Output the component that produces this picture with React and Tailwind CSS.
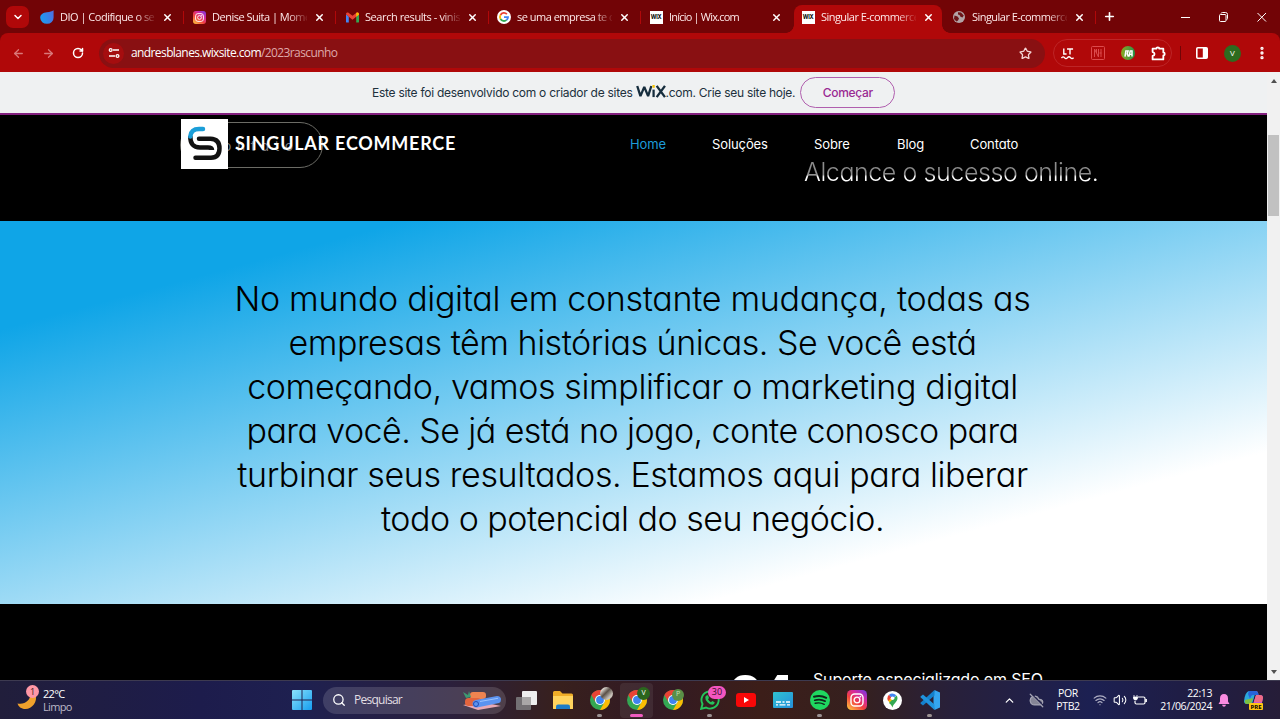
import React from "react";
import { ArrowLeft, ArrowRight, RotateCw, Star, X, Plus, ChevronDown, ChevronUp, Search, CloudOff, Wifi, Volume2, MoreVertical } from "lucide-react";

const ui = "font-['Open_Sans','Noto_Sans',sans-serif]";

function InstaIcon({ className, id }) {
  return (
    <svg viewBox="0 0 20 20" className={className}>
      <defs>
        <linearGradient id={id} x1="0.1" y1="1" x2="0.9" y2="0">
          <stop offset="0" stopColor="#fdc33f" />
          <stop offset="0.4" stopColor="#f2403f" />
          <stop offset="0.7" stopColor="#d42aa0" />
          <stop offset="1" stopColor="#7a3ae0" />
        </linearGradient>
      </defs>
      <rect width="20" height="20" rx="4.5" fill={`url(#${id})`} />
      <rect x="4" y="4" width="12" height="12" rx="3.6" fill="none" stroke="#fff" strokeWidth="1.4" />
      <circle cx="10" cy="10" r="2.9" fill="none" stroke="#fff" strokeWidth="1.4" />
      <circle cx="13.4" cy="6.6" r="0.9" fill="#fff" />
    </svg>
  );
}

function DioIcon() {
  return (
    <svg viewBox="0 0 14 14" className="size-[14px]">
      <defs>
        <linearGradient id="dio" x1="0" y1="0.6" x2="1" y2="0.3">
          <stop offset="0" stopColor="#1b9cf0" />
          <stop offset="1" stopColor="#4c6fe0" />
        </linearGradient>
      </defs>
      <path d="M13.6 0.3V7.500A6.700 6.200 0 0 1 .2 7.800C.2 4.500 3 2.400 7 2.200 10 2 12 1.500 13.600.3Z" fill="url(#dio)" />
    </svg>
  );
}

function GmailIcon() {
  return (
    <svg viewBox="0 0 14 11" className="w-[13px] h-[11px]">
      <path d="M0 2v8a1 1 0 0 0 1 1h2V4.500Z" fill="#4285f4" />
      <path d="M14 2v8a1 1 0 0 1-1 1h-2V4.500Z" fill="#34a853" />
      <path d="M0 2C0 .2 1.800-.4 3 .6L7 3.700 11 .6C12.200-.4 14 .2 14 2L11 4.800 7 7.800 3 4.800Z" fill="#ea4335" />
      <path d="M11 .6C12.200-.4 14 .2 14 2v.5L11 4.800Z" fill="#fbbc04" />
    </svg>
  );
}

function GoogleIcon() {
  return (
    <svg viewBox="0 0 14 14" className="size-[14px]">
      <circle cx="7" cy="7" r="7" fill="#fff" />
      <g fill="none" strokeWidth="1.800">
        <path d="M3.500 5A4 4 0 0 1 9.900 4.200" stroke="#ea4335" />
        <path d="M3.500 5A4 4 0 0 0 3.500 9" stroke="#fbbc04" />
        <path d="M3.500 9A4 4 0 0 0 9.500 10.100" stroke="#34a853" />
        <path d="M9.500 10.100A4 4 0 0 0 11 7.100H7" stroke="#4285f4" />
      </g>
    </svg>
  );
}

function WixIcon() {
  return (
    <span className="flex size-[13px] items-center justify-center bg-white font-['Inter',sans-serif] text-[5.500px] font-bold tracking-[-0.3px] text-black">WIX</span>
  );
}

function GlobeIcon() {
  return (
    <svg viewBox="0 0 12 12" className="size-[12px]">
      <circle cx="6" cy="6" r="6" fill="#b3a3a6" />
      <path d="M1.500 4.500 4.500 5.500 6 7.500 5 9.500 3.500 10.500 1 8ZM5 1.200 8 1.500 10.800 4.500 9.500 6.500 7.500 5.800 6.500 4 5 3.500Z" fill="#6b1518" />
    </svg>
  );
}

function ChromeIcon() {
  return (
    <svg viewBox="0 0 20 20" className="size-[20px]">
      <circle cx="10" cy="10" r="10" fill="#34a853" />
      <path d="M1.340 5A10 10 0 0 1 18.660 5H10a5 5 0 0 0-4.330 7.500Z" fill="#ea4335" />
      <path d="M18.660 5A10 10 0 0 1 10 20l4.330-7.500A5 5 0 0 0 10 5Z" fill="#fbbc04" />
      <circle cx="10" cy="10" r="5" fill="#fff" />
      <circle cx="10" cy="10" r="3.900" fill="#3f83f0" />
    </svg>
  );
}

function Tab({ icon, label, textClass, active, last, className }) {
  return (
    <div className={`relative flex h-[28px] shrink-0 items-center pb-[4px] ${className}`}>
      {active && (
        <>
          <div className="absolute inset-x-0 top-0 bottom-0 rounded-t-[8px] bg-[#b00809]" />
          <div className="absolute -left-[8px] bottom-0 size-[8px] bg-[radial-gradient(circle_at_0_0,#720406_7.500px,#b00809_8px)]" />
          <div className="absolute -right-[8px] bottom-0 size-[8px] bg-[radial-gradient(circle_at_100%_0,#720406_7.500px,#b00809_8px)]" />
        </>
      )}
      <div className="relative flex w-[14px] shrink-0 items-center justify-center">{icon}</div>
      <div className="relative ml-[6px] w-[95px] whitespace-nowrap text-[11px] leading-[16px] text-[#fde9e9] [mask-image:linear-gradient(90deg,#000_76px,transparent_97px)]">
        <span className={textClass}>{label}</span>
      </div>
      <X className="relative ml-[7px] size-[11px] shrink-0 text-white" strokeWidth={3.2} />
      {!active && !last && <div className="absolute right-0 top-[6px] h-[13px] w-px bg-[#b00809]" />}
    </div>
  );
}

function TabStrip() {
  return (
    <div className="flex h-[33px] items-end bg-[#720406]">
      <div className="mb-[5px] ml-[6px] flex h-[22px] w-[23px] shrink-0 items-center justify-center rounded-[7px] bg-[#b00809]">
        <ChevronDown className="size-[12px] text-white" strokeWidth={3} />
      </div>
      <div className="flex h-[28px]">
        <Tab className="w-[155px] pl-[11px]" icon={<DioIcon />} label="DIO | Codifique o seu" textClass="tracking-[-0.5px]" />
        <Tab className="w-[152px] pl-[8px]" icon={<InstaIcon id="ig1" className="size-[13px]" />} label="Denise Suita | Momen" textClass="tracking-[-0.5px]" />
        <Tab className="w-[153px] pl-[9px]" icon={<GmailIcon />} label="Search results - vinisa" textClass="tracking-[-0.42px]" />
        <Tab className="w-[152px] pl-[8px]" icon={<GoogleIcon />} label="se uma empresa te co" textClass="tracking-[-0.5px]" />
        <Tab last className="w-[153px] pl-[8px]" icon={<WixIcon />} label="Início | Wix.com" textClass="tracking-[-0.8px]" />
        <Tab active className="w-[148px] pl-[7px]" icon={<WixIcon />} label="Singular E-commerce" textClass="tracking-[-0.54px]" />
        <Tab className="w-[154px] pl-[10px]" icon={<GlobeIcon />} label="Singular E-commerce" textClass="tracking-[-0.54px]" />
      </div>
      <div className="flex h-[33px] flex-1 items-center text-white">
        <Plus className="ml-[7px] size-[13px]" strokeWidth={3} />
        <span className="flex-1" />
        <svg viewBox="0 0 90 12" className="mr-[13px] h-[12px] w-[90px]" fill="none" stroke="#fff" strokeWidth="1">
          <path d="M4 6.500h9" />
          <rect x="42.500" y="3.500" width="6.500" height="7" rx="1" />
          <path d="M44 2.500q.3-1 1.500-1h3q2 0 2 2v4q0 1-1 1.200" />
          <path d="M80.500 2l8.500 8.500M89 2l-8.500 8.500" />
        </svg>
      </div>
    </div>
  );
}

function Toolbar() {
  return (
    <div className="flex h-[39px] items-center rounded-t-[8px] bg-[#b00809] pt-px">
      <ArrowLeft className="ml-[12px] size-[13px] text-[#d9787a]" strokeWidth={2.400} />
      <ArrowRight className="ml-[17px] size-[13px] text-[#d9787a]" strokeWidth={2.400} />
      <RotateCw className="ml-[17px] size-[12px] text-white" strokeWidth={3} />
      <div className="ml-[15px] flex h-[29px] w-[946px] items-center rounded-full bg-[#891012] pl-[4px]">
        <span className="flex size-[21px] items-center justify-center rounded-full bg-[#a50d0f]">
          <svg viewBox="0 0 12 12" className="size-[12px]" fill="none" stroke="#fff" strokeWidth="1.300">
            <path d="M5 3h6M1 9h6" />
            <circle cx="2.700" cy="3" r="1.400" />
            <circle cx="9.500" cy="9" r="1.400" />
          </svg>
        </span>
        <span className="ml-[7px] flex-1 whitespace-nowrap text-[12px] tracking-[-0.6px] text-white">andresblanes.wixsite.com<span className="text-[#dfa9aa]">/2023rascunho</span></span>
        <Star className="mr-[13px] size-[13px] text-[#f3d5d5]" strokeWidth={2.400} />
      </div>
      <div className="ml-[8px] flex h-[28px] w-[119px] items-center rounded-full border border-[#bd2527] pl-[7px]">
        <svg viewBox="0 0 14 14" className="size-[13px]" fill="none" stroke="#fff" strokeWidth="1.500">
          <path d="M3 1.500v6h3M6.500 2.200h6.500M9.700 2.200v5.800M.5 12q1.600-2.500 3.250-.5t3.250 0 3.250 0 3.250 0" />
        </svg>
        <svg viewBox="0 0 14 14" className="ml-[17px] size-[14px]" fill="none" stroke="#dc4a4c" strokeWidth="1">
          <rect x=".5" y=".5" width="13" height="13" rx="1" />
          <path d="M3.500 11V3l4 8V3M10 3v8M5.500 3v4M8.500 7h2" />
        </svg>
        <span className="ml-[16px] flex size-[14px] items-center justify-center rounded-full bg-linear-to-r from-[#8aa71b] to-[#129447]">
          <svg viewBox="0 0 10 8" className="h-[7px] w-[9px]" fill="none" stroke="#fff" strokeWidth="1.700">
            <path d="M1 7.500 2 1h2.500L3.500 4.500 5 7.500M5.500 7.500 7 1h2v6.500M6 5h3" />
          </svg>
        </span>
        <svg viewBox="0 0 14 14" className="ml-[16px] size-[15px]" fill="none" stroke="#fff" strokeWidth="1.700">
          <path d="M1.500 2.500h3.500q0-1.300 1.400-1.300t1.400 1.300H11.500v3.500q1.300 0 1.300 1.400t-1.300 1.400V12.500h-10V9.300q1.800-.3 1.800-1.800T1.500 5.700Z" strokeLinejoin="round" />
        </svg>
      </div>
      <span className="ml-[8px] h-[14px] w-px bg-[#720406]" />
      <svg viewBox="0 0 12 12" className="ml-[15px] size-[12px]">
        <rect x=".8" y=".8" width="10.400" height="10.400" rx="1" fill="none" stroke="#fff" strokeWidth="1.600" />
        <path d="M6.800 1h4.200v10H6.800Z" fill="#fff" />
      </svg>
      <span className="ml-[16px] flex size-[17px] items-center justify-center rounded-full bg-[#2d6b1f] text-[8px] text-white">V</span>
      <MoreVertical className="ml-[13px] size-[16px] text-white" strokeWidth={3} />
    </div>
  );
}

function WixBanner() {
  return (
    <div className="flex h-[43px] items-center border-b-2 border-[#83207f] bg-[#eff1f2] pl-[372px] font-['Inter','Liberation_Sans',sans-serif] text-[12px] text-[#20303c]">
      <span className="whitespace-nowrap tracking-[-0.27px]">Este site foi desenvolvido com o criador de sites</span>
      <svg viewBox="0 0 29 14" className="mb-[3px] ml-[3px] h-[13px] w-[30px]" fill="none" stroke="#162d3d" strokeWidth="2.200" preserveAspectRatio="none">
        <path d="M1.200 1 4.300 12 8 2 11.700 12 14.800 1" strokeLinejoin="bevel" />
        <path d="M17 5v8" />
        <path d="M17 0v3" stroke="#f5c400" />
        <path d="M20 1l8 12M28 1l-8 12" />
      </svg>
      <span className="whitespace-nowrap tracking-[-0.27px]">.com. Crie seu site hoje.</span>
      <span className="ml-[5px] flex h-[31px] w-[95px] items-center justify-center rounded-full border border-[#b05fae] font-medium tracking-[-0.3px] text-[#9a2a92]">Começar</span>
    </div>
  );
}

function Logo() {
  return (
    <div className="flex h-[50px] w-[47px] items-center justify-center bg-white">
      <svg viewBox="0 0 47 50" className="h-[50px] w-[47px]" fill="none" strokeWidth="4.500" strokeLinecap="round">
        <path d="M9.300 17Q9 28.500 19 28.500H27Q31 28.500 31 31" stroke="#111" strokeLinecap="butt" />
        <path d="M18 19.700H29.500Q38.500 20 38.500 29.300Q38.500 38.700 30 38.700H14.500" stroke="#111" />
        <path d="M9.300 17.500Q10 10 18 10H22" stroke="#1b9ed8" />
      </svg>
    </div>
  );
}

function SiteHeader() {
  return (
    <div className="relative h-[106px] bg-black font-['Inter',sans-serif] [font-feature-settings:'cv11']">
      <div className="absolute left-[180px] top-[7px] flex h-[46px] w-[143px] items-center rounded-full border border-[#6c6c66] pl-[42px] text-[14px] tracking-[5.500px] text-[#7c7c7c]">ontato</div>
      <div className="absolute left-[804px] top-[42px] whitespace-nowrap bg-linear-to-b from-[#8c8c8c] from-[58%] to-white to-[66%] bg-clip-text text-[25px] font-[350] leading-[30px] tracking-[-0.42px] text-transparent">Alcance o sucesso online.</div>
      <div className="relative flex pl-[181px] pt-[4px]">
        <Logo />
        <span className="ml-[7px] mt-[12px] w-[219px] whitespace-nowrap font-['Lato',sans-serif] text-[18px] font-bold leading-[24px] tracking-[0.75px] text-white">SINGULAR ECOMMERCE</span>
        <nav className="ml-[176px] mt-[15px] flex whitespace-nowrap text-[13px] leading-[20px] tracking-[-0.1px] text-white">
          <span className="w-[82px] text-[#1d9bd8]">Home</span>
          <span className="w-[102px]">Soluções</span>
          <span className="w-[83px]">Sobre</span>
          <span className="w-[73px]">Blog</span>
          <span>Contato</span>
        </nav>
      </div>
    </div>
  );
}

function Hero() {
  return (
    <div className="flex h-[383px] flex-col items-center whitespace-nowrap bg-[linear-gradient(165deg,#0fa5e7_15%,#ffffff_79%)] pr-[2px] pt-[56px] font-['Inter',sans-serif] text-[34px] font-light leading-[44px] text-black [font-feature-settings:'cv11']">
      <span className="tracking-[-0.31px]">No mundo digital em constante mudança, todas as</span>
      <span className="tracking-[-0.46px]">empresas têm histórias únicas. Se você está</span>
      <span className="tracking-[-0.37px]">começando, vamos simplificar o marketing digital</span>
      <span className="tracking-[-0.56px]">para você. Se já está no jogo, conte conosco para</span>
      <span className="tracking-[-0.37px]">turbinar seus resultados. Estamos aqui para liberar</span>
      <span className="tracking-[-0.5px]">todo o potencial do seu negócio.</span>
    </div>
  );
}

function Scrollbar() {
  return (
    <div className="flex w-[13px] flex-col items-center bg-[#f1f1f1]">
      <span className="mt-[7px] border-x-[3px] border-b-[4px] border-x-transparent border-b-[#505050]" />
      <span className="mt-[52px] h-[81px] w-[11px] bg-[#c1c1c1]" />
      <span className="flex-1" />
      <span className="mb-[6px] border-x-[3px] border-t-[4px] border-x-transparent border-t-[#505050]" />
    </div>
  );
}

function Slot({ children, dot, active }) {
  return (
    <div className={`relative flex h-[35px] w-[33px] shrink-0 items-center justify-center rounded-[4px] ${active ? "bg-white/7" : ""}`}>
      {children}
      {dot && <span className={`absolute bottom-px h-[3px] rounded-full ${active ? "w-[13px] bg-[#f05cc0]" : "w-[5px] bg-[#9b9292]"}`} />}
    </div>
  );
}

function Taskbar() {
  return (
    <div className="flex h-[39px] items-center border-t border-[#3d3a50] bg-[linear-gradient(90deg,#211e3b_0px,#1d1c4c_200px,#1e2050_300px,#2b203c_450px,#38201d_560px,#321a24_650px,#3c1e19_760px,#35201f_860px,#28203a_950px,#1c2052_1090px,#1f1d45_1180px,#261d38_1280px)] text-white">
      <div className="relative ml-[17px] h-[30px] w-[23px]">
        <svg viewBox="0 0 23 30" className="h-[30px] w-[23px]">
          <path d="M18.500 9C21 17 15 24 8.500 24 4 24 1.500 21.500.5 18.500 8 20 13.500 15 13.500 9Z" fill="#f0a12c" />
        </svg>
        <span className="absolute left-[9px] top-0 flex size-[13px] items-center justify-center rounded-full bg-[#ff97a6] text-[9px] text-[#321820]">1</span>
      </div>
      <div className="ml-[3px] w-[249px] pb-px text-[11px] leading-[13px]">
        <div className="tracking-[-0.7px]">22°C</div>
        <div className="tracking-[-0.65px] text-[#bcb9c8]">Limpo</div>
      </div>
      <svg viewBox="0 0 20 20" className="size-[20px]">
        <defs>
          <linearGradient id="win" x1="0" y1="0" x2="1" y2="1">
            <stop offset="0" stopColor="#8be2fb" />
            <stop offset="1" stopColor="#159df0" />
          </linearGradient>
        </defs>
        <path d="M0 1Q0 0 1 0h8.500v9.500H0ZM10.500 0H19q1 0 1 1v8.500h-9.500ZM0 10.500h9.500V20H1q-1 0-1-1ZM10.500 10.500H20V19q0 1-1 1h-8.500Z" fill="url(#win)" />
      </svg>
      <div className="ml-[11px] flex h-[27px] w-[183px] items-center rounded-full bg-white/14 pl-[9px]">
        <Search className="size-[14px] text-white" strokeWidth={2.200} />
        <span className="ml-[8px] flex-1 text-[12px] tracking-[-0.75px] text-[#e2dfe3]">Pesquisar</span>
        <svg viewBox="0 0 40 20" className="mr-[4px] h-[20px] w-[40px]">
          <path d="M1 15 20 12 39 16 16 20Z" fill="#e9a9b4" />
          <rect x="8" y="2" width="16" height="7" rx="3" fill="#ef8450" />
          <rect x="3" y="8" width="16" height="8" rx="3.500" fill="#e2643d" />
          <path d="M4 8 1 2 6 5 7 1 9 7Z" fill="#3d9a72" />
          <path d="M14 10 35 6q4 0 4 3.500 0 3-2 3.500L15 17.500q-4 .5-4.500-3.500 0-3.500 3.500-4Z" fill="#5b93f0" />
          <circle cx="14" cy="14" r="2.500" fill="none" stroke="#234bb0" />
          <path d="M18 11.500 36 8.300" stroke="#9cc4ff" />
        </svg>
      </div>
      <div className="ml-[4px] flex items-center">
        <div className="w-[36px]"><Slot>
          <svg viewBox="0 0 21 19" className="h-[19px] w-[21px]">
            <rect x="6" y="0" width="15" height="14" rx="1" fill="#eee" />
            <rect x="0" y="6" width="15" height="13" rx="1" fill="#737073" />
            <rect x="6" y="6" width="9" height="8" fill="#a9a7a7" />
          </svg>
        </Slot></div>
        <div className="w-[37px]"><Slot>
          <svg viewBox="0 0 20 18" className="h-[18px] w-[20px]">
            <path d="M0 1.500Q0 0 1.500 0H7l2.500 2.500H18.500Q20 2.500 20 4V18H0Z" fill="#f0ae28" />
            <path d="M0 5H20V17q0 1-1 1H1q-1 0-1-1Z" fill="#ffd45e" />
            <path d="M3 18V15.500Q3 13.500 5 13.500H15q2 0 2 2V18Z" fill="#1c7cc7" />
          </svg>
        </Slot></div>
        <div className="w-[37px]"><Slot dot>
          <ChromeIcon />
          <span className="absolute right-[3px] top-[4px] size-[13px] rounded-full bg-[linear-gradient(135deg,#d6d0c8_20%,#5a5048_45%,#c9c3bb_75%)]" />
        </Slot></div>
        <div className="w-[36px]"><Slot dot active>
          <ChromeIcon />
          <span className="absolute right-[3px] top-[4px] flex size-[13px] items-center justify-center rounded-full bg-[#2b661d] text-[7px]">V</span>
        </Slot></div>
        <div className="w-[37px]"><Slot>
          <ChromeIcon />
          <span className="absolute right-[5px] top-[6px] flex size-[12px] items-center justify-center rounded-full bg-[#5a8f47] text-[7px] text-[#c8e0bb]">P</span>
        </Slot></div>
        <div className="w-[36px]"><Slot dot>
          <svg viewBox="0 0 20 20" className="size-[20px]" fill="none">
            <path d="M1.200 18.800 2.500 14A8.600 8.600 0 1 1 6 17.500Z" stroke="#24c45b" strokeWidth="1.900" />
            <path d="M6.500 5.500 8 5.300 9 8 8 9.300Q9 11.400 11 12.200L12.200 11 14.700 12.200Q14.500 14.500 12.500 14.700 10 14.700 7.500 12.200T5.300 7.500Q5.400 6 6.500 5.500Z" fill="#24c45b" />
          </svg>
          <span className="absolute left-[15px] top-[3px] flex h-[13px] w-[18px] items-center justify-center rounded-full bg-[#f455c0] text-[9px] text-[#351025]">30</span>
        </Slot></div>
        <div className="w-[37px]"><Slot>
          <svg viewBox="0 0 20 14" className="h-[14px] w-[20px]">
            <rect width="20" height="14" rx="3" fill="#f90808" />
            <path d="M8 4 13 7 8 10Z" fill="#fff" />
          </svg>
        </Slot></div>
        <div className="w-[37px]"><Slot>
          <svg viewBox="0 0 20 16" className="h-[16px] w-[20px]">
            <defs>
              <linearGradient id="cap" x1="0" y1="0" x2="1" y2="1">
                <stop offset="0" stopColor="#30c2cf" />
                <stop offset="1" stopColor="#248fdc" />
              </linearGradient>
            </defs>
            <rect width="20" height="16" rx="1" fill="url(#cap)" />
            <path d="M3 10h5M9.500 10h2M13 10h4M3 12.800h2M6.500 12.800h6M14 12.800h3" stroke="#fff" strokeWidth="1.300" />
          </svg>
        </Slot></div>
        <div className="w-[37px]"><Slot dot>
          <svg viewBox="0 0 20 20" className="size-[20px]" fill="none" stroke="#10251a" strokeLinecap="round">
            <circle cx="10" cy="10" r="10" fill="#1fd760" stroke="none" />
            <path d="M4 6.800Q10.500 4.800 16.200 7.800" strokeWidth="2" />
            <path d="M4.700 10.200Q10.500 8.500 15.200 11.200" strokeWidth="1.700" />
            <path d="M5.200 13.300Q10 12 14.200 14.300" strokeWidth="1.400" />
          </svg>
        </Slot></div>
        <div className="w-[36px]"><Slot><InstaIcon id="ig2" className="size-[20px]" /></Slot></div>
        <div className="w-[37px]"><Slot>
          <svg viewBox="0 0 19 19" className="size-[19px]">
            <circle cx="9.500" cy="9.500" r="9.500" fill="#fff" />
            <path d="M9.500 16.500C9 13 4.500 11 4.500 7.300L9.500 7.500Z" fill="#fbbc04" />
            <path d="M9.500 16.500C10 13 14.500 11 14.500 7.300 14.500 6 14 5 13.500 4.500L6 12Q9 14 9.500 16.500Z" fill="#34a853" />
            <path d="M4.500 7.300C4.500 5.500 5 4.700 6 3.800L9 6.500 5 10Q4.500 8.500 4.500 7.300Z" fill="#ea4335" />
            <path d="M6 3.800Q9.500 1 13.300 4.300L9.500 8Z" fill="#4285f4" />
            <circle cx="9.500" cy="7.200" r="1.800" fill="#fff" />
          </svg>
        </Slot></div>
        <Slot dot>
          <svg viewBox="0 0 20 20" className="size-[20px]">
            <path d="M14.500 0 20 2.400V17.600L14.500 20 13.500 15V5Z" fill="#35a6f0" />
            <path d="M14.500 0V5.500L3 15.500 0.500 13.500V12.700Z" fill="#1481cc" />
            <path d="M14.500 20V14.500L3 4.500.5 6.500V7.300Z" fill="#1f93de" />
          </svg>
        </Slot>
      </div>
      <div className="flex flex-1 items-center">
        <ChevronUp className="ml-[57px] size-[13px]" strokeWidth={2.400} />
        <CloudOff className="ml-[13px] size-[15px] text-[#a4a4b4]" fill="#858596" strokeWidth={2} />
        <div className="ml-[5px] w-[38px] text-center text-[10.500px] leading-[13px] tracking-[-0.4px]"><div>POR</div><div>PTB2</div></div>
        <Wifi className="ml-[6px] size-[14px] text-[#b0b0c5]" strokeWidth={2} />
        <Volume2 className="ml-[6px] size-[14px]" strokeWidth={1.800} />
        <svg viewBox="0 0 14 12" className="ml-[6px] h-[12px] w-[14px]" fill="none" stroke="#fff" strokeWidth="1.200">
          <path d="M5 3h5.500q1.500 0 1.500 1.500v4q0 1.500-1.500 1.500h-7Q2 10 2 8.500V7M13.300 5v3" />
          <path d="M1 1v2M4 1v2M.5 3h4v1.500q-.3 1.500-2 1.500t-2-1.500Z" fill="#fff" strokeWidth=".8" />
        </svg>
        <div className="ml-[7px] w-[58px] whitespace-nowrap text-right text-[10.500px] leading-[13px] tracking-[-0.4px]"><div>22:13</div><div>21/06/2024</div></div>
        <svg viewBox="0 0 12 13" className="ml-[6px] h-[13px] w-[12px]" fill="#f98be0">
          <path d="M6 0Q10 0 10 4.500V7.500L11.500 10H.5L2 7.500V4.500Q2 0 6 0ZM4 10.800h4Q7.500 12.700 6 12.700T4 10.800Z" />
        </svg>
        <div className="relative ml-[14px] h-[20px] w-[20px]">
          <svg viewBox="0 0 20 20" className="size-[20px]">
            <path d="M5 1H12L8 14H3Q0 14 0 11Q1 2 5 1Z" fill="#2ba8db" />
            <path d="M1 10 9 8 7 14H3Q0 14 1 10Z" fill="#7bc043" />
            <path d="M12 1Q14 1 14.500 5H16Q19 5 19 8L17 17H8L12 5Z" fill="#c65bd0" />
            <path d="M12 5 16 5Q19 5 19 8L18 12H10Z" fill="#ee6b86" />
            <path d="M5 1H12Q14 1 14.500 5H9Q7 5 6 9L4 4Z" fill="#2864d8" />
          </svg>
          <span className="absolute left-[5px] top-[13px] flex h-[7px] w-[14px] items-center justify-center rounded-[1px] bg-[#ffc414] text-[6px] font-bold leading-none text-black">PRE</span>
        </div>
      </div>
    </div>
  );
}

export default function App() {
  return (
    <div className={`flex h-[719px] w-[1280px] flex-col overflow-hidden ${ui}`}>
      <div className="bg-[#720406]">
        <TabStrip />
        <Toolbar />
      </div>
      <div className="flex h-[608px]">
        <div className="w-[1267px] overflow-hidden">
          <WixBanner />
          <SiteHeader />
          <Hero />
          <div className="flex h-[76px] items-start overflow-hidden bg-black pl-[730px] pt-[65px] font-['Inter',sans-serif] text-white [font-feature-settings:'cv11']">
            <span className="w-[83px] whitespace-nowrap text-[49px] font-extrabold leading-[50px]">24</span>
            <span className="whitespace-nowrap text-[16px] leading-[20px] tracking-[-0.15px]">Suporte especializado em SEO</span>
          </div>
        </div>
        <Scrollbar />
      </div>
      <Taskbar />
    </div>
  );
}
